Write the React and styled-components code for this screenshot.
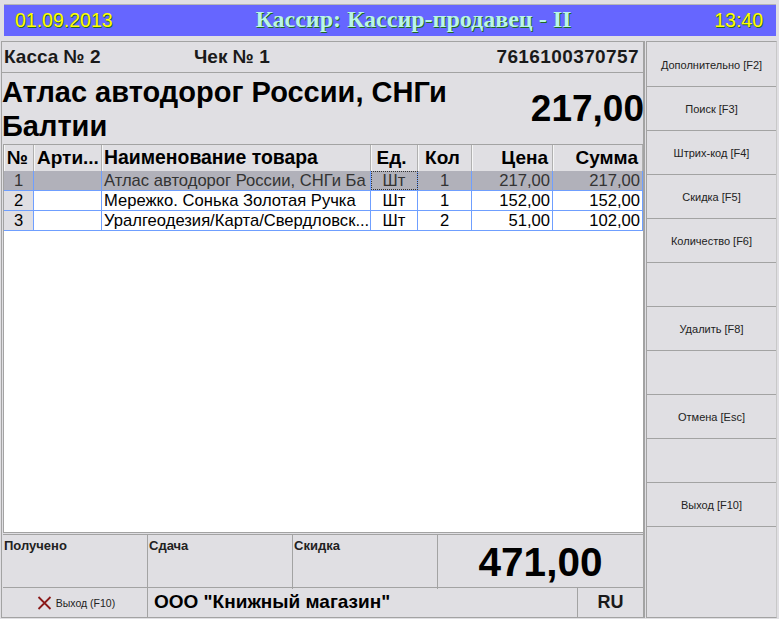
import React from "react";
import styled, { createGlobalStyle } from "styled-components";

const GlobalStyle = createGlobalStyle`
  html, body { margin: 0; padding: 0; background: #e0dfe3; }
  body { font-family: "Liberation Sans", Arial, sans-serif; color: #000; }
`;

const columns = "30px 68px 269px 47px 54px 81px 90px";
const line = "#a3a3a3";

const Window = styled.div`
  width: 779px;
  height: 619px;
  box-sizing: border-box;
  padding: 4px 2px 1px 1px;
  display: flex;
  flex-direction: column;
  gap: 5px;
  overflow: hidden;
`;

const TopBar = styled.div`
  height: 32px;
  margin: 0 1px 0 3px;
  box-sizing: border-box;
  border-top: 1px solid #b5b5b5;
  background: #6666ff;
  display: flex;
  align-items: center;
  justify-content: space-between;
  padding: 0 13px 0 11px;
`;

const Clock = styled.span`
  font-size: 19.5px;
  color: #ffff00;
  text-shadow: 1px 1px 0 #1e6b1e;
`;

const Caption = styled.span`
  font-family: "Liberation Serif", "Times New Roman", serif;
  font-weight: bold;
  font-size: 24px;
  color: #b9f5e8;
  text-shadow: 1px 1px 0 #1e6b1e;
  position: relative;
  top: -1px;
`;

const Body = styled.div`
  flex: 1;
  display: flex;
  gap: 1px;
  min-height: 0;
`;

const Main = styled.div`
  width: 644px;
  box-sizing: border-box;
  border: 1px solid ${line};
  border-right-width: 2px;
  display: flex;
  flex-direction: column;
`;

const InfoRow = styled.div`
  height: 31px;
  box-sizing: border-box;
  border-bottom: 1px solid ${line};
  display: flex;
  align-items: center;
  padding: 0 4px 0 2px;
  font-size: 19px;
  font-weight: bold;
  color: #1a1a1a;
`;

const Kassa = styled.span`
  width: 190px;
`;

const Barcode = styled.span`
  margin-left: auto;
  letter-spacing: 0.4px;
`;

const ProductRow = styled.div`
  height: 71px;
  display: flex;
  align-items: center;
  justify-content: space-between;
`;

const ProductName = styled.div`
  width: 480px;
  height: 69px;
  padding-top: 2px;
  font-size: 29px;
  line-height: 34px;
  font-weight: bold;
`;

const ProductPrice = styled.div`
  font-size: 37px;
  font-weight: bold;
  padding-left: 1px;
  margin-right: -1px;
`;

const Table = styled.div`
  flex: 1;
  margin: 0 0 1px 1px;
  border: 1px solid ${line};
  background: #fff;
  width: 639px;
`;

const HeadRow = styled.div`
  display: grid;
  grid-template-columns: ${columns};
  height: 26px;
  background: #e0dfe3;
`;

const HeadCell = styled.div`
  box-sizing: border-box;
  border-left: 1px solid #f6f6f6;
  border-right: 1px solid #b0b0b0;
  padding: 0 ${(p) => p.$pad || 4}px 0 ${(p) => p.$left || 1}px;
  font-size: ${(p) => (p.$wide ? "19.4px" : "19px")};
  font-weight: bold;
  line-height: 25px;
  white-space: nowrap;
  overflow: hidden;
  text-align: ${(p) => p.$align || "left"};
`;

const DataRow = styled.div`
  display: grid;
  grid-template-columns: ${columns};
  height: 20px;
  box-sizing: border-box;
  border-bottom: 1px solid #6f9fff;
  background: ${(p) => (p.$active ? "#b1b1ba" : "#fff")};
  color: ${(p) => (p.$active ? "#333" : "#000")};
`;

const DataCell = styled.div`
  box-sizing: border-box;
  border-right: 1px solid #6f9fff;
  padding: 0 2px 0 2px;
  font-size: 16.6px;
  font-weight: 400;
  line-height: 20px;
  white-space: nowrap;
  overflow: hidden;
  text-align: ${(p) => p.$align || "left"};
  background: ${(p) => (p.$fixed && !p.$active ? "#e0dfe3" : "transparent")};
  outline: ${(p) => (p.$focus ? "1px dotted #333" : "none")};
  outline-offset: -1px;
`;

const Totals = styled.div`
  height: 52px;
  margin-left: 1px;
  border-top: 1px solid ${line};
  display: grid;
  grid-template-columns: 144px 145px 145px 1fr;
`;

const TotalCell = styled.div`
  box-sizing: border-box;
  border-left: ${(p) => (p.$first ? "none" : `1px solid ${line}`)};
  padding: 3px 1px 0;
  font-size: 13px;
  font-weight: bold;
  color: #222;
`;

const GrandTotal = styled.div`
  border-left: 1px solid ${line};
  font-size: 40.5px;
  font-weight: bold;
  line-height: 54px;
  text-align: center;
`;

const Footer = styled.div`
  height: 29px;
  margin-left: 1px;
  border-top: 1px solid ${line};
  display: grid;
  grid-template-columns: 144px 430px 1fr;
`;

const ExitButton = styled.div`
  display: flex;
  align-items: center;
  justify-content: center;
  gap: 4px;
  font-size: 10.5px;
  color: #222;
  padding-left: 2px;
`;

const CompanyName = styled.div`
  border-left: 1px solid ${line};
  padding-left: 6px;
  font-size: 19px;
  font-weight: bold;
  line-height: 28px;
`;

const Lang = styled.div`
  border-left: 1px solid ${line};
  font-size: 18px;
  font-weight: bold;
  line-height: 29px;
  text-align: center;
  color: #1a1a1a;
`;

const Side = styled.div`
  width: 132px;
  box-sizing: border-box;
  border: 1px solid ${line};
  border-right-color: #c8c8c8;
  display: flex;
  flex-direction: column;
  padding-top: 1px;
`;

const SideButton = styled.div`
  height: 44px;
  box-sizing: border-box;
  border-bottom: 1px solid ${line};
  display: flex;
  align-items: center;
  justify-content: center;
  font-size: 11px;
  color: #222;
  padding-top: 1px;
`;

const rows = [
  { n: 1, name: "Атлас автодорог России, СНГи Ба", qty: 1, price: "217,00", sum: "217,00" },
  { n: 2, name: "Мережко. Сонька Золотая Ручка", qty: 1, price: "152,00", sum: "152,00" },
  { n: 3, name: "Уралгеодезия/Карта/Свердловск...", qty: 2, price: "51,00", sum: "102,00" },
];

const buttons = [
  "Дополнительно [F2]",
  "Поиск [F3]",
  "Штрих-код [F4]",
  "Скидка [F5]",
  "Количество [F6]",
  "",
  "Удалить [F8]",
  "",
  "Отмена [Esc]",
  "",
  "Выход [F10]",
];

function CrossIcon() {
  return (
    <svg width="15" height="14" viewBox="0 0 15 14">
      <path d="M1.5 1 L13.5 13 M13.5 1 L1.5 13" stroke="#8b1a1a" strokeWidth="1.8" fill="none" />
    </svg>
  );
}

export default function App() {
  return (
    <Window>
      <GlobalStyle />
      <TopBar>
        <Clock>01.09.2013</Clock>
        <Caption>Кассир: Кассир-продавец - II</Caption>
        <Clock>13:40</Clock>
      </TopBar>
      <Body>
        <Main>
          <InfoRow>
            <Kassa>Касса № 2</Kassa>
            <span>Чек № 1</span>
            <Barcode>7616100370757</Barcode>
          </InfoRow>
          <ProductRow>
            <ProductName>Атлас автодорог России, СНГи Балтии</ProductName>
            <ProductPrice>217,00</ProductPrice>
          </ProductRow>
          <Table>
            <HeadRow>
              <HeadCell $align="center">№</HeadCell>
              <HeadCell $left={2}>Арти...</HeadCell>
              <HeadCell $wide>Наименование товара</HeadCell>
              <HeadCell $align="center" $pad={7}>Ед.</HeadCell>
              <HeadCell $align="center" $pad={6}>Кол</HeadCell>
              <HeadCell $align="right">Цена</HeadCell>
              <HeadCell $align="right">Сумма</HeadCell>
            </HeadRow>
            {rows.map((r, i) => (
              <DataRow key={r.n} $active={i === 0}>
                <DataCell $align="center" $fixed $active={i === 0}>{r.n}</DataCell>
                <DataCell />
                <DataCell>{r.name}</DataCell>
                <DataCell $align="center" $focus={i === 0}>Шт</DataCell>
                <DataCell $align="center">{r.qty}</DataCell>
                <DataCell $align="right">{r.price}</DataCell>
                <DataCell $align="right">{r.sum}</DataCell>
              </DataRow>
            ))}
          </Table>
          <Totals>
            <TotalCell $first>Получено</TotalCell>
            <TotalCell>Сдача</TotalCell>
            <TotalCell>Скидка</TotalCell>
            <GrandTotal>471,00</GrandTotal>
          </Totals>
          <Footer>
            <ExitButton>
              <CrossIcon />
              Выход (F10)
            </ExitButton>
            <CompanyName>ООО "Книжный магазин"</CompanyName>
            <Lang>RU</Lang>
          </Footer>
        </Main>
        <Side>
          {buttons.map((label, i) => (
            <SideButton key={i}>{label}</SideButton>
          ))}
        </Side>
      </Body>
    </Window>
  );
}
